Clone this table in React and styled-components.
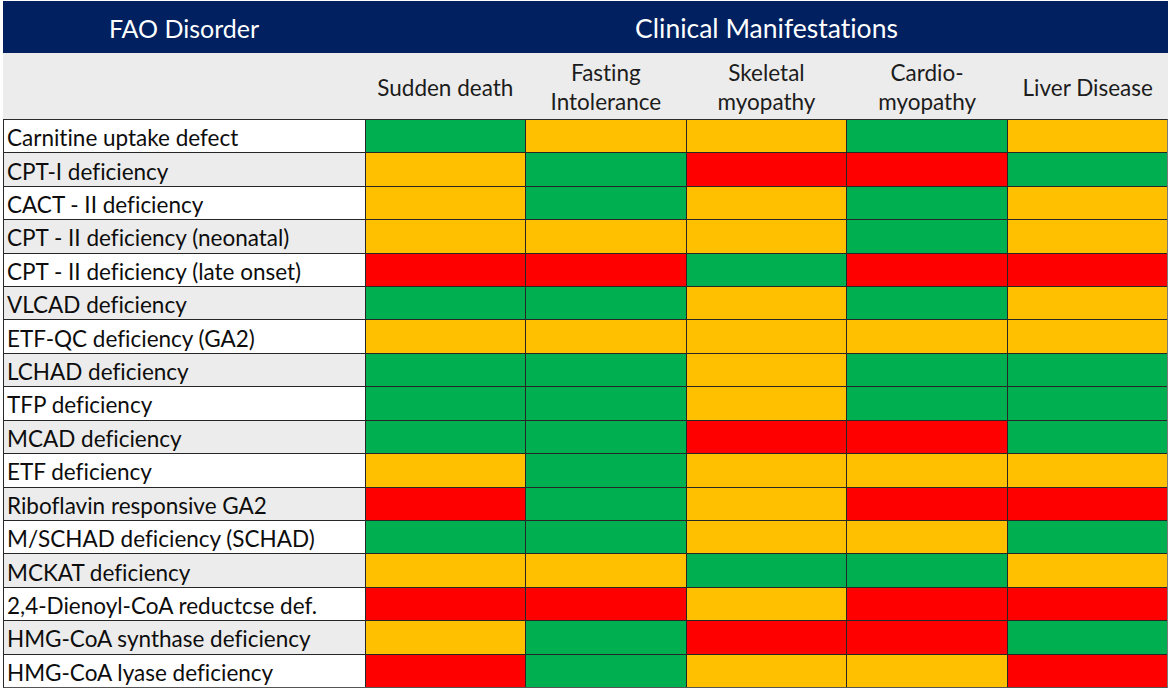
import React from "react";
import styled, { createGlobalStyle } from "styled-components";

const Global = createGlobalStyle`
  html, body { margin: 0; padding: 0; background: #ffffff; }
  body {
    font-family: Lato, "Open Sans", "Liberation Sans", sans-serif;
    font-variant-ligatures: none;
    font-feature-settings: "liga" 0, "clig" 0;
  }
`;

const COLORS = { G: "#00b050", Y: "#ffc000", R: "#ff0000" };

const Page = styled.div`
  width: 1169px;
  height: 688px;
  padding: 1px 1px 0 3px;
  box-sizing: border-box;
  display: flex;
  flex-direction: column;
`;

const HeaderBar = styled.div`
  display: grid;
  grid-template-columns: 362px 1fr;
  height: 52px;
  background: #002060;
  color: #ffffff;
  align-items: center;
  text-align: center;
`;

const HeaderTitle = styled.div`
  font-size: ${(p) => p.$size}px;
  padding-top: 2px;
`;

const SubHeader = styled.div`
  display: grid;
  grid-template-columns: 362px repeat(5, 1fr);
  height: 66px;
  background: #ececec;
  align-items: center;
  text-align: center;
  color: #1c1c1c;
  font-size: 22.5px;
  line-height: 29px;
`;

const ColLabel = styled.div`
  padding-top: 2px;
`;

const Body = styled.div`
  flex: 1;
  display: grid;
  grid-template-columns: 361px repeat(5, 1fr);
  grid-template-rows: repeat(17, 1fr);
  gap: 1px;
  background: #262626;
  border: 1px solid #2a2a2a;
  border-right-color: #7a7a7a;
  border-bottom-color: #555;
`;

const RowLabel = styled.div`
  background: ${(p) => (p.$alt ? "#ececec" : "#ffffff")};
  color: #0d0d0d;
  font-size: 22.5px;
  display: flex;
  align-items: center;
  padding: 3px 0 0 3px;
  white-space: nowrap;
`;

const Cell = styled.div`
  background: ${(p) => COLORS[p.$v]};
`;

const columns = [
  ["Sudden death"],
  ["Fasting", "Intolerance"],
  ["Skeletal", "myopathy"],
  ["Cardio-", "myopathy"],
  ["Liver Disease"],
];

const rows = [
  ["Carnitine uptake defect", "GYYGY"],
  ["CPT-I deficiency", "YGRRG"],
  ["CACT - II deficiency", "YGYGY"],
  ["CPT - II deficiency (neonatal)", "YYYGY"],
  ["CPT - II deficiency (late onset)", "RRGRR"],
  ["VLCAD deficiency", "GGYGY"],
  ["ETF-QC deficiency (GA2)", "YYYYY"],
  ["LCHAD deficiency", "GGYGG"],
  ["TFP deficiency", "GGYGG"],
  ["MCAD deficiency", "GGRRG"],
  ["ETF deficiency", "YGYYY"],
  ["Riboflavin responsive GA2", "RGYRR"],
  ["M/SCHAD deficiency (SCHAD)", "GGYYG"],
  ["MCKAT deficiency", "YYGGY"],
  ["2,4-Dienoyl-CoA reductcse def.", "RRYRR"],
  ["HMG-CoA synthase deficiency", "YGRRG"],
  ["HMG-CoA lyase deficiency", "RGYYR"],
];

export default function App() {
  return (
    <>
      <Global />
      <Page>
        <HeaderBar>
          <HeaderTitle $size={25}>FAO Disorder</HeaderTitle>
          <HeaderTitle $size={26.5}>Clinical Manifestations</HeaderTitle>
        </HeaderBar>
        <SubHeader>
          <div />
          {columns.map((lines, i) => (
            <ColLabel key={i}>
              {lines.map((l, j) => (
                <div key={j}>{l}</div>
              ))}
            </ColLabel>
          ))}
        </SubHeader>
        <Body>
          {rows.map(([name, vals], i) => (
            <React.Fragment key={name}>
              <RowLabel $alt={i % 2 === 1}>{name}</RowLabel>
              {vals.split("").map((v, j) => (
                <Cell key={j} $v={v} />
              ))}
            </React.Fragment>
          ))}
        </Body>
      </Page>
    </>
  );
}
